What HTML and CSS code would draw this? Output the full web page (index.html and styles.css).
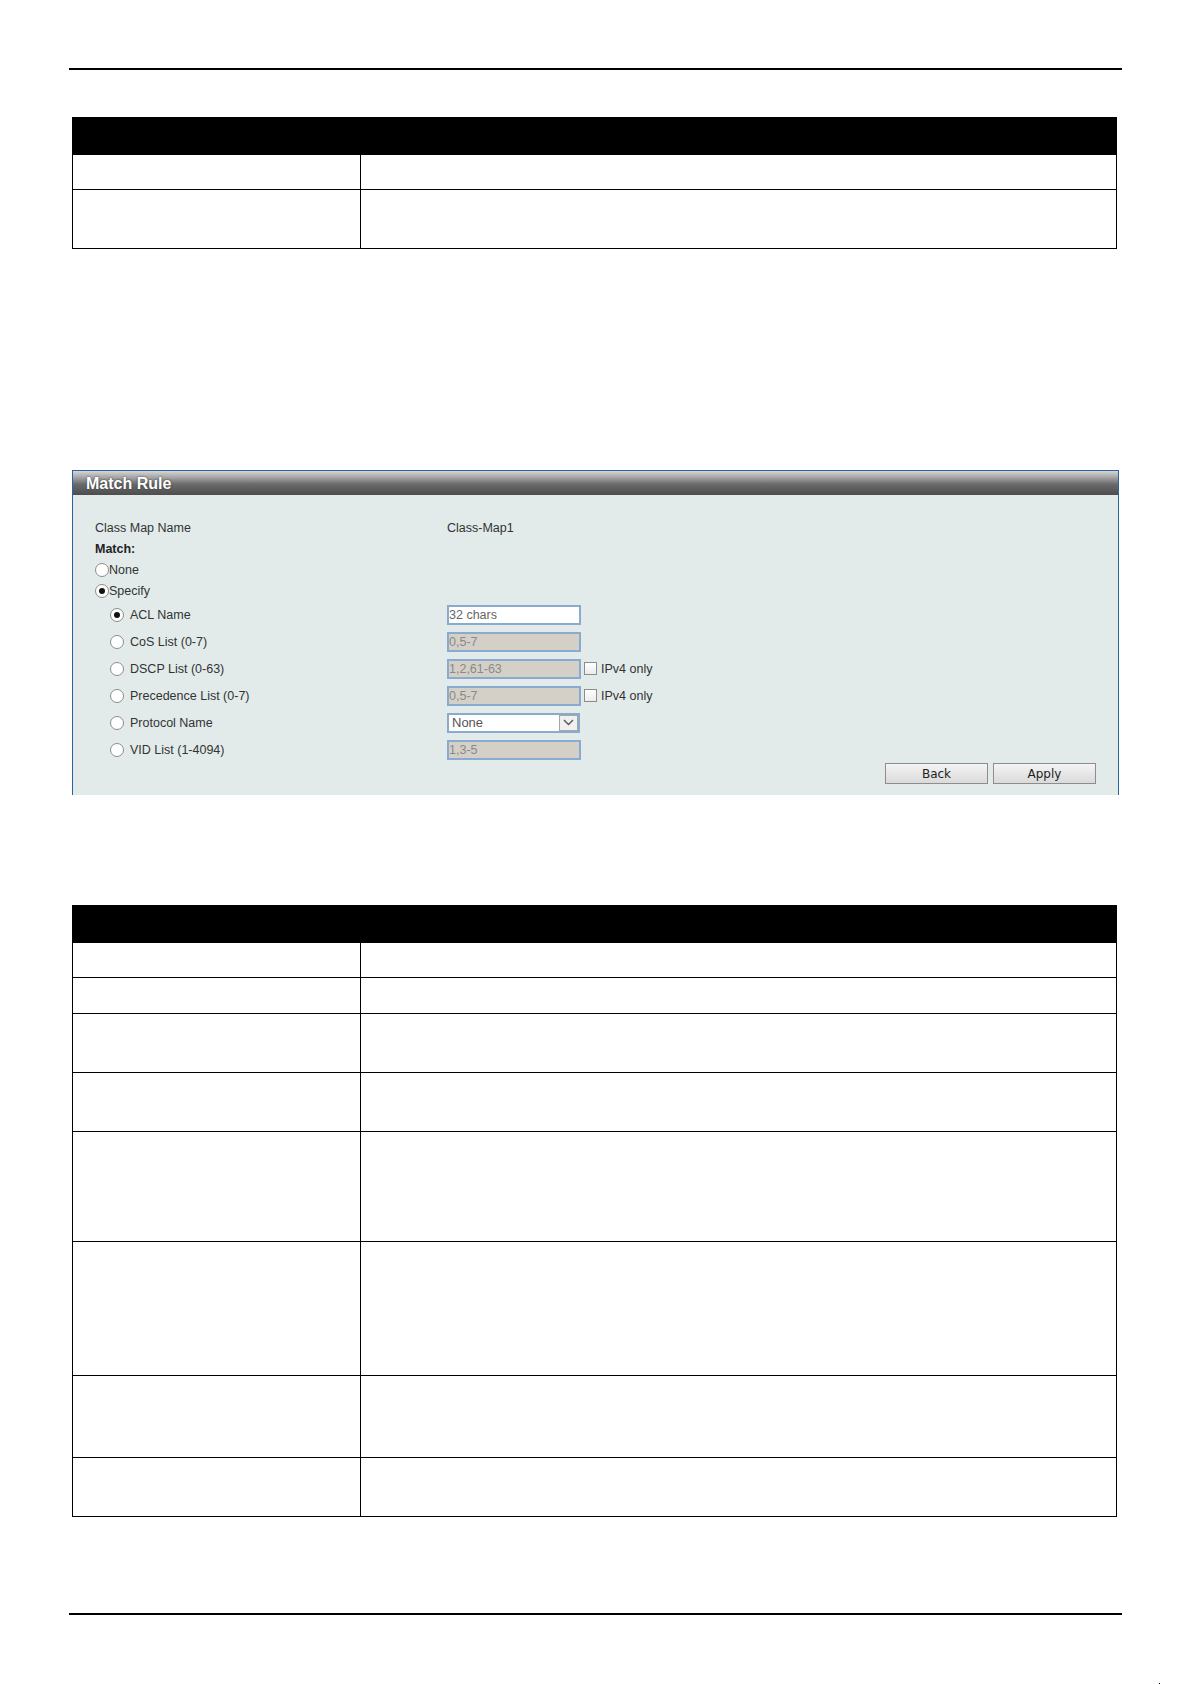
FILE: index.html
```html
<!DOCTYPE html>
<html>
<head>
  <title>Match Rule</title>
  <link rel="stylesheet" href="styles.css">
</head>
<body>
  <div class="page">
    <div class="rule"></div>

    <table class="param-table first-table">
      <colgroup><col class="col-name"><col></colgroup>
      <tr class="head"><th></th><th></th></tr>
      <tr class="h1"><td></td><td></td></tr>
      <tr class="h2"><td></td><td></td></tr>
    </table>

    <div class="panel">
      <div class="panel-title">Match Rule</div>
      <div class="panel-body">
        <div class="row top-row">
          <span>Class Map Name</span>
          <span>Class-Map1</span>
        </div>
        <div class="row top-row"><b>Match:</b></div>
        <div class="row top-row"><span class="opt"><span class="radio"></span>None</span></div>
        <div class="row top-row"><span class="opt"><span class="radio checked"></span>Specify</span></div>

        <div class="row sub-row">
          <span class="opt sub"><span class="radio checked"></span>ACL Name</span>
          <span class="field"><span class="text-box empty">32 chars</span></span>
        </div>
        <div class="row sub-row">
          <span class="opt sub"><span class="radio"></span>CoS List (0-7)</span>
          <span class="field"><span class="text-box disabled">0,5-7</span></span>
        </div>
        <div class="row sub-row">
          <span class="opt sub"><span class="radio"></span>DSCP List (0-63)</span>
          <span class="field"><span class="text-box disabled">1,2,61-63</span><span class="check"></span>IPv4 only</span>
        </div>
        <div class="row sub-row">
          <span class="opt sub"><span class="radio"></span>Precedence List (0-7)</span>
          <span class="field"><span class="text-box disabled">0,5-7</span><span class="check"></span>IPv4 only</span>
        </div>
        <div class="row sub-row">
          <span class="opt sub"><span class="radio"></span>Protocol Name</span>
          <span class="field">
            <span class="select-box">None
              <span class="select-arrow">
                <svg width="11" height="7" viewBox="0 0 11 7"><polyline points="1,1 5.5,5.5 10,1" fill="none" stroke="#555" stroke-width="1.4"/></svg>
              </span>
            </span>
          </span>
        </div>
        <div class="row sub-row">
          <span class="opt sub"><span class="radio"></span>VID List (1-4094)</span>
          <span class="field"><span class="text-box disabled">1,3-5</span></span>
        </div>

        <div class="buttons">
          <button>Back</button>
          <button>Apply</button>
        </div>
      </div>
    </div>

    <table class="param-table second-table">
      <colgroup><col class="col-name"><col></colgroup>
      <tr class="head"><th></th><th></th></tr>
      <tr class="h1"><td></td><td></td></tr>
      <tr class="h1b"><td></td><td></td></tr>
      <tr class="h2"><td></td><td></td></tr>
      <tr class="h2"><td></td><td></td></tr>
      <tr class="h4"><td></td><td></td></tr>
      <tr class="h5"><td></td><td></td></tr>
      <tr class="h3"><td></td><td></td></tr>
      <tr class="h2"><td></td><td></td></tr>
    </table>

    <div class="rule bottom-rule"></div>
  </div>

  <div class="footer">
    <div class="footer-line"></div>
    <div class="footer-mark"></div>
  </div>
</body>
</html>
```

FILE: styles.css
```css
body {
  margin: 0;
  background: #fff;
  font-family: "Liberation Sans", Arial, sans-serif;
  font-size: 12.5px;
  color: #333;
}
.page {
  width: 1053px;
  margin-left: 69px;
  padding-top: 68px;
}
.rule {
  height: 2px;
  background: #000;
}

/* parameter tables */
.param-table {
  border-collapse: collapse;
  table-layout: fixed;
  width: 1045px;
  margin-left: 3px;
}
.first-table {
  margin-top: 47px;
}
.second-table {
  margin-top: 110px;
}
.col-name {
  width: 288px;
}
.param-table th,
.param-table td {
  border: 1px solid #000;
  padding: 0;
}
.param-table th {
  background: #000;
  height: 36px;
}
.h1 td { height: 34px; }
.h1b td { height: 35px; }
.h2 td { height: 58px; }
.h3 td { height: 81px; }
.h4 td { height: 109px; }
.h5 td { height: 133px; }

/* Match Rule panel */
.panel {
  width: 1045px;
  margin: 221px 0 0 3px;
  border: 1px solid #2a64a0;
  border-bottom: none;
  background: #e2ebea;
}
.panel-title {
  height: 24px;
  line-height: 25px;
  padding-left: 13px;
  background: linear-gradient(#d6d6d6 0%, #a9a9a9 25%, #6a6a6a 55%, #4d4d4d 100%);
  color: #fff;
  font-size: 16px;
  font-weight: bold;
  text-shadow: 0 0 2px #333;
}
.panel-body {
  padding: 22px 22px 11px 22px;
}
.row {
  display: grid;
  grid-template-columns: 352px auto;
  align-items: center;
}
.top-row {
  height: 21px;
}
.sub-row {
  height: 27px;
}
.row b {
  color: #222;
}
.opt {
  display: flex;
  align-items: center;
}
.opt.sub {
  padding-left: 15px;
}
.radio {
  width: 12px;
  height: 12px;
  border: 1px solid #8c8c8c;
  border-radius: 50%;
  background: #fff;
  display: flex;
  align-items: center;
  justify-content: center;
}
.opt.sub .radio {
  margin-right: 6px;
}
.radio.checked::after {
  content: "";
  width: 6px;
  height: 6px;
  border-radius: 50%;
  background: #111;
}
.field {
  display: flex;
  align-items: center;
}
.text-box {
  box-sizing: border-box;
  width: 134px;
  height: 20px;
  line-height: 16px;
  border: 2px solid #89abcf;
  padding-left: 0;
  background: #fff;
  color: #666;
}
.text-box.disabled {
  background: #d4d0c8;
  color: #8a8a8a;
}
.check {
  width: 11px;
  height: 11px;
  border: 1px solid #8c8c8c;
  background: linear-gradient(#ffffff, #ececec);
  margin: 0 4px 0 3px;
}
.select-box {
  box-sizing: border-box;
  width: 133px;
  height: 20px;
  border: 2px solid #89abcf;
  background: #fff;
  color: #555;
  padding-left: 3px;
  display: flex;
  align-items: center;
  justify-content: space-between;
  font-size: 13px;
}
.select-arrow {
  box-sizing: border-box;
  width: 19px;
  height: 16px;
  border: 1px solid #a6a6a6;
  background: #f0f0f0;
  display: flex;
  align-items: center;
  justify-content: center;
}
.buttons {
  display: flex;
  justify-content: flex-end;
  gap: 5px;
}
.buttons button {
  width: 103px;
  height: 21px;
  padding: 0;
  border: 1px solid #8d8d8d;
  background: linear-gradient(#f4f4f4, #dadada);
  font-family: "DejaVu Sans", Verdana, sans-serif;
  font-size: 12px;
  color: #222;
}

.bottom-rule {
  margin-top: 96px;
}

/* page footer */
.footer {
  display: flex;
  align-items: flex-end;
  width: 1160px;
  margin-top: 68px;
  justify-content: space-between;
}
.footer-line {
  width: 903px;
  height: 1px;
  background: #000;
}
.footer-mark {
  width: 1px;
  height: 2px;
  background: #000;
}
```
